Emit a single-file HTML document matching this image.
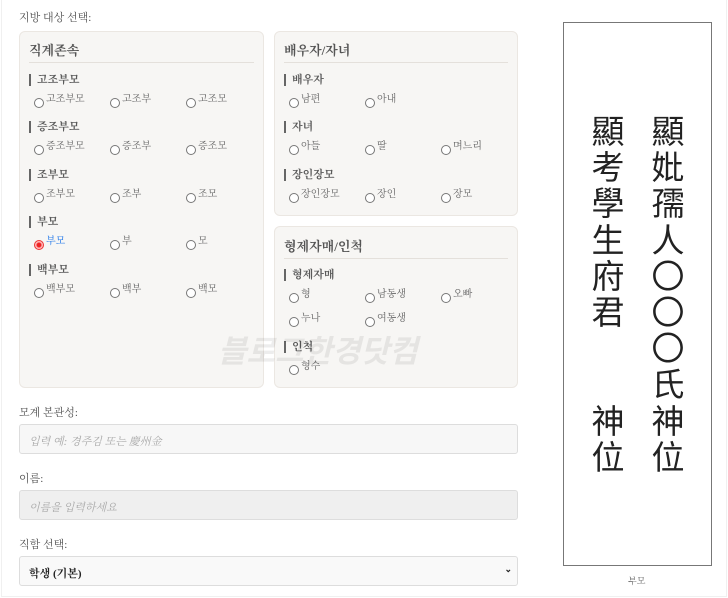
<!DOCTYPE html>
<html><head><meta charset="utf-8"><style>
*{margin:0;padding:0;box-sizing:border-box}
body{width:728px;height:598px;background:#fff;position:relative;overflow:hidden;font-family:"Liberation Serif","Noto Serif CJK SC",serif;color:#444}
.a{position:absolute;white-space:nowrap}
.frame{position:absolute;left:1px;top:0;width:726px;height:597px;border:1px solid #f0f0f0;border-top:none}
.card{position:absolute;background:#f7f6f4;border:1px solid #ebe7e2;border-radius:6px}
.t{position:absolute;font-size:13px;font-weight:bold;color:#555}
.hr{position:absolute;height:1px;background:#e4e0db}
.g{position:absolute;font-size:11px;font-weight:bold;color:#5a5a5a;padding-left:6px;border-left:2px solid #666;line-height:12px}
.r{position:absolute;font-size:10px;color:#666;line-height:12px}
.r:before{content:"";position:absolute;left:-12px;top:4px;width:8px;height:8px;border:1px solid #777;border-radius:50%;background:#fff}
.r.on{color:#1a73e8}
.r.on:before{border-color:#e33;background:radial-gradient(circle,#e22 0 2px,#fbb 3px)}
.lbl{position:absolute;left:19px;font-size:11px;color:#555}
.in{position:absolute;left:19px;width:499px;height:30px;border:1px solid #ddd;border-radius:3px;background:#f7f7f7;font-size:11px;font-style:italic;color:#aaa;padding:8px 9px}
.col{position:absolute;width:40px;text-align:center;font-family:"Noto Sans CJK TC","Noto Sans CJK SC",sans-serif;font-size:33px;line-height:36.2px;color:#222}
</style></head><body>
<div class="frame"></div>
<div class="a" style="left:19px;top:9px;font-size:11px;color:#555">지방 대상 선택:</div>

<div class="card" style="left:19px;top:31px;width:245px;height:357px"></div>
<div class="t" style="left:29px;top:40px">직계존속</div>
<div class="hr" style="left:29px;top:62px;width:225px"></div>
<div class="g" style="left:29px;top:74px">고조부모</div>
<div class="r" style="left:46px;top:94px">고조부모</div><div class="r" style="left:122px;top:94px">고조부</div><div class="r" style="left:198px;top:94px">고조모</div>
<div class="g" style="left:29px;top:121px">증조부모</div>
<div class="r" style="left:46px;top:141px">증조부모</div><div class="r" style="left:122px;top:141px">증조부</div><div class="r" style="left:198px;top:141px">증조모</div>
<div class="g" style="left:29px;top:169px">조부모</div>
<div class="r" style="left:46px;top:189px">조부모</div><div class="r" style="left:122px;top:189px">조부</div><div class="r" style="left:198px;top:189px">조모</div>
<div class="g" style="left:29px;top:216px">부모</div>
<div class="r on" style="left:46px;top:236px">부모</div><div class="r" style="left:122px;top:236px">부</div><div class="r" style="left:198px;top:236px">모</div>
<div class="g" style="left:29px;top:264px">백부모</div>
<div class="r" style="left:46px;top:284px">백부모</div><div class="r" style="left:122px;top:284px">백부</div><div class="r" style="left:198px;top:284px">백모</div>

<div class="card" style="left:274px;top:31px;width:244px;height:185px"></div>
<div class="t" style="left:284px;top:40px">배우자/자녀</div>
<div class="hr" style="left:284px;top:62px;width:224px"></div>
<div class="g" style="left:284px;top:74px">배우자</div>
<div class="r" style="left:301px;top:94px">남편</div><div class="r" style="left:377px;top:94px">아내</div>
<div class="g" style="left:284px;top:121px">자녀</div>
<div class="r" style="left:301px;top:141px">아들</div><div class="r" style="left:377px;top:141px">딸</div><div class="r" style="left:453px;top:141px">며느리</div>
<div class="g" style="left:284px;top:169px">장인장모</div>
<div class="r" style="left:301px;top:189px">장인장모</div><div class="r" style="left:377px;top:189px">장인</div><div class="r" style="left:453px;top:189px">장모</div>

<div class="card" style="left:274px;top:226px;width:244px;height:162px"></div>
<div class="t" style="left:284px;top:236px">형제자매/인척</div>
<div class="hr" style="left:284px;top:258px;width:224px"></div>
<div class="g" style="left:284px;top:269px">형제자매</div>
<div class="r" style="left:301px;top:289px">형</div><div class="r" style="left:377px;top:289px">남동생</div><div class="r" style="left:453px;top:289px">오빠</div>
<div class="r" style="left:301px;top:313px">누나</div><div class="r" style="left:377px;top:313px">여동생</div>
<div class="g" style="left:284px;top:341px">인척</div>
<div class="r" style="left:301px;top:361px">형수</div>

<div class="a" style="left:218px;top:326px;font-family:'Liberation Sans','Noto Sans CJK KR',sans-serif;font-size:31px;font-weight:bold;font-style:italic;color:rgba(0,0,0,0.07)">블로그한경닷컴</div>

<div class="lbl" style="top:404px">모계 본관성:</div>
<div class="in" style="top:424px">입력 예: 경주김 또는 慶州金</div>
<div class="lbl" style="top:470px">이름:</div>
<div class="in" style="top:490px;background:#efefef">이름을 입력하세요</div>
<div class="lbl" style="top:536px">직함 선택:</div>
<div class="in" style="top:556px;font-style:normal;color:#222;font-weight:bold;background:#f9f9f9">학생 (기본)<span style="position:absolute;right:5px;top:7px;font-size:9px">&#8964;</span></div>

<div class="a" style="left:563px;top:22px;width:149px;height:544px;border:1px solid #777"></div>
<div class="col" style="left:648px;top:111px">顯<br>妣<br>孺<br>人<br>〇<br>〇<br>〇<br>氏<br>神<br>位</div>
<div class="col" style="left:588px;top:111px">顯<br>考<br>學<br>生<br>府<br>君<br>&nbsp;<br>&nbsp;<br>神<br>位</div>
<div class="a" style="left:628px;top:574px;font-size:9px;color:#666">부모</div>
</body></html>
